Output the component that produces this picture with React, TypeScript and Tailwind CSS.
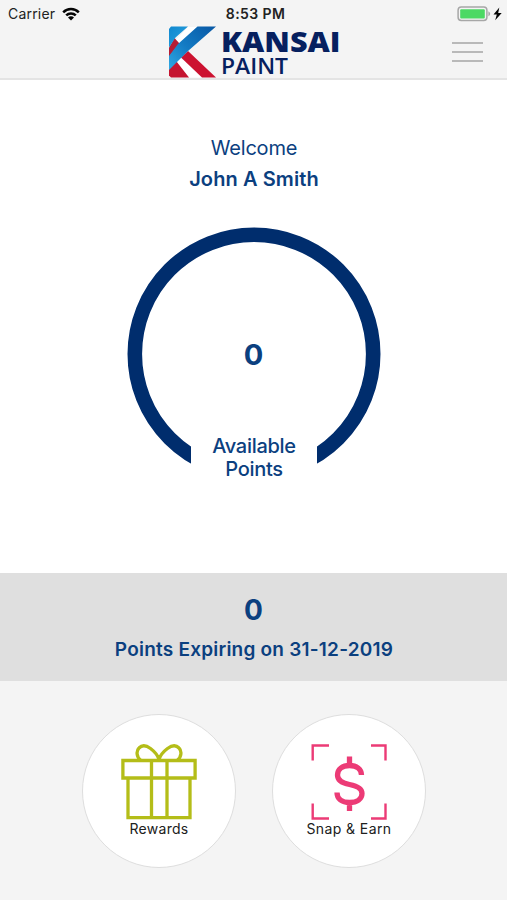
function StatusBar() {
  return (
    <div className="grid h-[27px] grid-cols-3 items-center pl-[8px] pr-[4px] text-[14px] leading-[27px] text-[#222]">
      <div className="flex items-center gap-[7px]">
        <span className="tracking-[0.2px]">Carrier</span>
        <svg width="18" height="14" viewBox="0 0 18 14" fill="none" stroke="#050505" strokeWidth="2.5">
          <path d="M1.2 5.3a11 11 0 0 1 15.6 0" />
          <path d="M4.2 8.4a6.8 6.8 0 0 1 9.6 0" />
          <path d="M9 13.4 6 10.5a4.2 4.2 0 0 1 6 0z" fill="#050505" stroke="none" />
        </svg>
      </div>
      <div className="text-center font-semibold tracking-[0.4px] whitespace-nowrap">8:53 PM</div>
      <svg className="justify-self-end" width="46" height="16" viewBox="0 0 46 16">
        <rect x="1.1" y="1.1" width="28.8" height="13.4" rx="3.2" fill="#f4f4f4" stroke="#a7a7a7" strokeWidth="1.5" />
        <rect x="3.2" y="3.2" width="24.6" height="9.2" rx="1" fill="#4cd964" />
        <path d="M31.4 5.3q1.8 1 1.8 2.5t-1.8 2.5z" fill="#a7a7a7" />
        <path d="M42.3 1.5 36.5 8.6h3.3L38.2 14.2 44.7 7h-3.5z" fill="#050505" />
      </svg>
    </div>
  );
}

function Logo() {
  return (
    <svg className="overflow-visible" width="176" height="51" viewBox="168 27 176 51" role="img" aria-label="Kansai Paint">
      <defs>
        <linearGradient id="blue" x1="0" y1="1" x2="1" y2="0">
          <stop offset="0" stopColor="#30a9e3" />
          <stop offset=".45" stopColor="#137bc4" />
          <stop offset="1" stopColor="#0857a4" />
        </linearGradient>
        <linearGradient id="sky" x1="0" y1="0" x2="1" y2="1">
          <stop offset="0" stopColor="#1188cf" />
          <stop offset="1" stopColor="#2aa4e0" />
        </linearGradient>
      </defs>
      <path d="M188 27H198L176 46 169 57V47z" fill="#fff" />
      <path d="M176 62 181 57.5 202 77.5H189z" fill="#fff" />
      <path d="M169 47.5 174.5 38 179.5 43.5 169 57z" fill="#b51d35" />
      <path d="M171 26.5H188L175.5 37.5 169 47.5V29z" fill="url(#sky)" />
      <path d="M169 69 176.5 61.5 189 77.5H171L169 75.5z" fill="#c51530" />
      <path d="M181 57.5 188 51 216 77.5H202z" fill="#cc1230" />
      <path d="M197.5 26.5H216L188 51 169 70V56L178 44z" fill="url(#blue)" />
      <text x="221" y="52" fontFamily="Open Sans" fontWeight="800" fontSize="29" textLength="119.5" lengthAdjust="spacingAndGlyphs" fill="#06205f">KANSAI</text>
      <text x="221" y="73.5" fontFamily="Open Sans" fontWeight="600" fontSize="21.5" textLength="67" lengthAdjust="spacingAndGlyphs" fill="#06205f">PAINT</text>
    </svg>
  );
}

function Header() {
  return (
    <header className="h-[80px] border-b-2 border-[#e4e4e4] bg-[#f4f4f4]">
      <StatusBar />
      <div className="flex h-[51px] items-start pl-[168px] pr-[24px]">
        <Logo />
        <button aria-label="Menu" className="mt-[15px] ml-auto flex w-[31px] flex-col gap-[7px]">
          <span className="h-[2px] bg-[#b9b9b9]" />
          <span className="h-[2px] bg-[#b9b9b9]" />
          <span className="h-[2px] bg-[#b9b9b9]" />
        </button>
      </div>
    </header>
  );
}

function PointsRing() {
  return (
    <div className="mt-[33px] grid h-[254px] w-[254px] grid-cols-1 grid-rows-1">
      <svg className="col-start-1 row-start-1" width="254" height="254" viewBox="0 0 254 254">
        <clipPath id="gap">
          <path d="M0 0H254V254H190V127H64V254H0z" />
          <path d="M0 0H254V200H0z" />
        </clipPath>
        <circle cx="127" cy="127" r="119.2" fill="none" stroke="#002d6d" strokeWidth="14.6" clipPath="url(#gap)" />
      </svg>
      <div className="col-start-1 row-start-1 flex flex-col items-center">
        <span className="mt-[108px] text-[29px] leading-[40px] font-bold">0</span>
        <p className="mt-[60px] ml-px text-center text-[20px] leading-[23px] font-medium tracking-[-0.3px]">
          Available
          <br />
          Points
        </p>
      </div>
    </div>
  );
}

function Gift() {
  return (
    <svg width="76" height="77" viewBox="0 0 76 77" fill="none" stroke="#b4bd18" strokeWidth="3.3">
      <path d="M1.9 17.5H74.1V35H1.9zM7 35V74.7H69V35M30.5 17.5V75M46 17.5V75" />
      <path d="M19.5 17C15.500 14 15 8 18 5c3-3.200 7.500-2.500 11.500.5 4 3 7 6 8.500 11M56.500 17C60.500 14 61 8 58 5c-3-3.200-7.500-2.500-11.500.5-4 3-7 6-8.500 11" />
    </svg>
  );
}

function Snap() {
  return (
    <svg width="76" height="77" viewBox="0 0 76 77" fill="none" stroke="#ec3b76">
      <path strokeWidth="2.4" d="M1.7 17.5V2.5H18M60 2.5H74.5V17.5M74.5 60.5V75.5H60M18 75.5H1.7V60.5" />
      <path strokeWidth="5.3" d="M38.5 13.5v10M38.5 58v10M50.500 32c0-6-5-9.500-12-9.500S26.500 26 26.500 32c0 5.500 4 8 12 9.500S51 46 51 50.500C51 56 46 59.500 38.500 59.500S26 56 26 49.500" />
    </svg>
  );
}

export default function App() {
  return (
    <div className="flex h-[900px] w-[507px] flex-col overflow-hidden bg-[#f4f4f4] font-['Inter',sans-serif] text-[#0b407f]">
      <Header />
      <main className="flex h-[493px] flex-col items-center bg-white pt-[53px]">
        <p className="ml-px text-[20px] leading-[30px] tracking-[-0.2px]">Welcome</p>
        <h1 className="mt-px ml-px text-[20px] leading-[30px] font-semibold tracking-[0.1px]">John A Smith</h1>
        <PointsRing />
      </main>
      <section className="flex h-[108px] flex-col items-center bg-[#dfdfdf] pt-[17px]">
        <span className="text-[28px] leading-[40px] font-bold">0</span>
        <p className="mt-[5px] ml-px text-[19px] leading-[30px] font-semibold tracking-[0.22px]">Points Expiring on 31-12-2019</p>
      </section>
      <nav className="flex gap-[36px] pt-[33px] pl-[82px] text-[14px] text-[#202020]">
        <button className="flex h-[154px] w-[154px] flex-col items-center rounded-full border border-[#dedede] bg-white pt-[28px]">
          <Gift />
          <span className="-mt-px leading-[19px] tracking-[0.3px]">Rewards</span>
        </button>
        <button className="flex h-[154px] w-[154px] flex-col items-center rounded-full border border-[#dedede] bg-white pt-[28px]">
          <Snap />
          <span className="-mt-px leading-[19px] tracking-[0.4px]">Snap &amp; Earn</span>
        </button>
      </nav>
    </div>
  );
}
